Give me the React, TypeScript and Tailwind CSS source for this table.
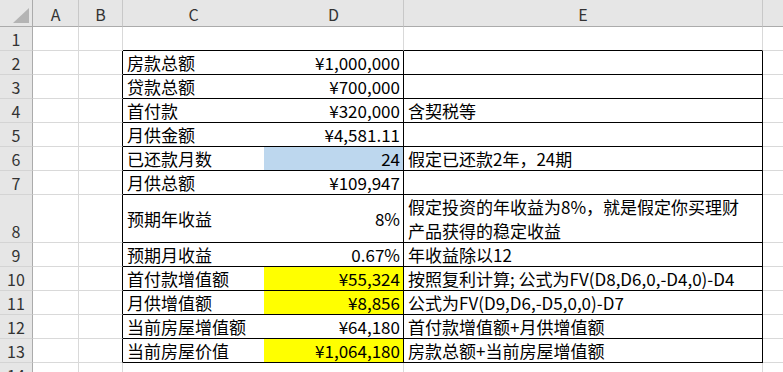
import React from 'react';

type Row = {
  n: number;
  label: string;
  value: string;
  note?: React.ReactNode;
  fill?: 'blue' | 'yellow';
  tall?: boolean;
};

const rows: Row[] = [
  { n: 2, label: '房款总额', value: '¥1,000,000' },
  { n: 3, label: '贷款总额', value: '¥700,000' },
  { n: 4, label: '首付款', value: '¥320,000', note: '含契税等' },
  { n: 5, label: '月供金额', value: '¥4,581.11' },
  { n: 6, label: '已还款月数', value: '24', note: '假定已还款2年，24期', fill: 'blue' },
  { n: 7, label: '月供总额', value: '¥109,947' },
  {
    n: 8,
    label: '预期年收益',
    value: '8%',
    tall: true,
    note: (
      <>
        假定投资的年收益为8%，就是假定你买理财
        <br />
        产品获得的稳定收益
      </>
    ),
  },
  { n: 9, label: '预期月收益', value: '0.67%', note: '年收益除以12' },
  { n: 10, label: '首付款增值额', value: '¥55,324', note: '按照复利计算; 公式为FV(D8,D6,0,-D4,0)-D4', fill: 'yellow' },
  { n: 11, label: '月供增值额', value: '¥8,856', note: '公式为FV(D9,D6,-D5,0,0)-D7', fill: 'yellow' },
  { n: 12, label: '当前房屋增值额', value: '¥64,180', note: '首付款增值额+月供增值额' },
  { n: 13, label: '当前房屋价值', value: '¥1,064,180', note: '房款总额+当前房屋增值额', fill: 'yellow' },
];

const hdr = 'flex items-end justify-center bg-[#e6e6e6] border-b border-b-[#ababab] pb-[2px] text-[16px] leading-[20px] text-[#333]';
const rowHdr = 'flex items-end justify-center bg-[#e6e6e6] border-r border-r-[#ababab] border-b border-b-[#d4d4d4] pb-[1px] text-[16px] leading-[20px] text-[#333]';
const grid = 'border-r border-b border-[#d9d9d9]';

function EmptyRow({ n }: { n: number }) {
  const top = n === 1;
  return (
    <>
      <div className={rowHdr}>{n}</div>
      <div className={grid} />
      <div className={grid} />
      <div className={top ? 'border-b border-b-black' : 'border-b border-b-[#d9d9d9]'} />
      <div className={top ? 'border-r border-r-[#d9d9d9] border-b border-b-black' : grid} />
      <div className={top ? 'border-r border-r-[#d9d9d9] border-b border-b-black' : grid} />
      <div className="border-b border-b-[#d9d9d9]" />
    </>
  );
}

function DataRow({ r }: { r: Row }) {
  const fill = r.fill === 'blue' ? 'bg-[#bdd7ee]' : r.fill === 'yellow' ? 'bg-[#ffff00]' : '';
  return (
    <>
      <div className={rowHdr}>{r.n}</div>
      <div className={grid} />
      <div className="border-b border-b-[#d9d9d9] border-r border-r-black" />
      <div className="flex items-center border-b border-b-black pl-[4px] leading-[20px]">{r.label}</div>
      <div className={`flex items-center justify-end border-b border-r border-black pr-[3px] leading-[20px] ${fill}`}>
        {r.value}
      </div>
      <div
        className={`flex border-b border-r border-black pl-[4px] ${
          r.tall ? 'items-start pt-[0px] leading-[24px]' : 'items-center leading-[20px]'
        }`}
      >
        <span className="whitespace-nowrap">{r.note}</span>
      </div>
      <div className="border-b border-b-[#d9d9d9]" />
    </>
  );
}

export default function App() {
  return (
    <div className="h-[372px] w-[783px] overflow-hidden bg-white font-['Noto_Sans_CJK_SC',sans-serif] text-[17px] text-black">
      <div className="grid grid-cols-[33px_46px_44px_141px_140px_359px_20px] grid-rows-[27px_repeat(7,24px)_48px_repeat(6,24px)]">
        <div className="relative bg-[#e6e6e6] border-r border-b border-[#ababab]">
          <svg className="absolute right-[3px] bottom-[3px]" width="16" height="15" viewBox="0 0 16 15">
            <polygon points="16,0 16,15 0,15" fill="#b4b4b4" />
          </svg>
        </div>
        <div className={`${hdr} border-r border-r-[#c8c8c8]`}>A</div>
        <div className={`${hdr} border-r border-r-[#c8c8c8]`}>B</div>
        <div className={hdr}>C</div>
        <div className={`${hdr} border-r border-r-[#c8c8c8]`}>D</div>
        <div className={`${hdr} border-r border-r-[#c8c8c8]`}>E</div>
        <div className={hdr} />

        <EmptyRow n={1} />
        {rows.map((r) => (
          <DataRow key={r.n} r={r} />
        ))}
        <EmptyRow n={14} />
      </div>
    </div>
  );
}
